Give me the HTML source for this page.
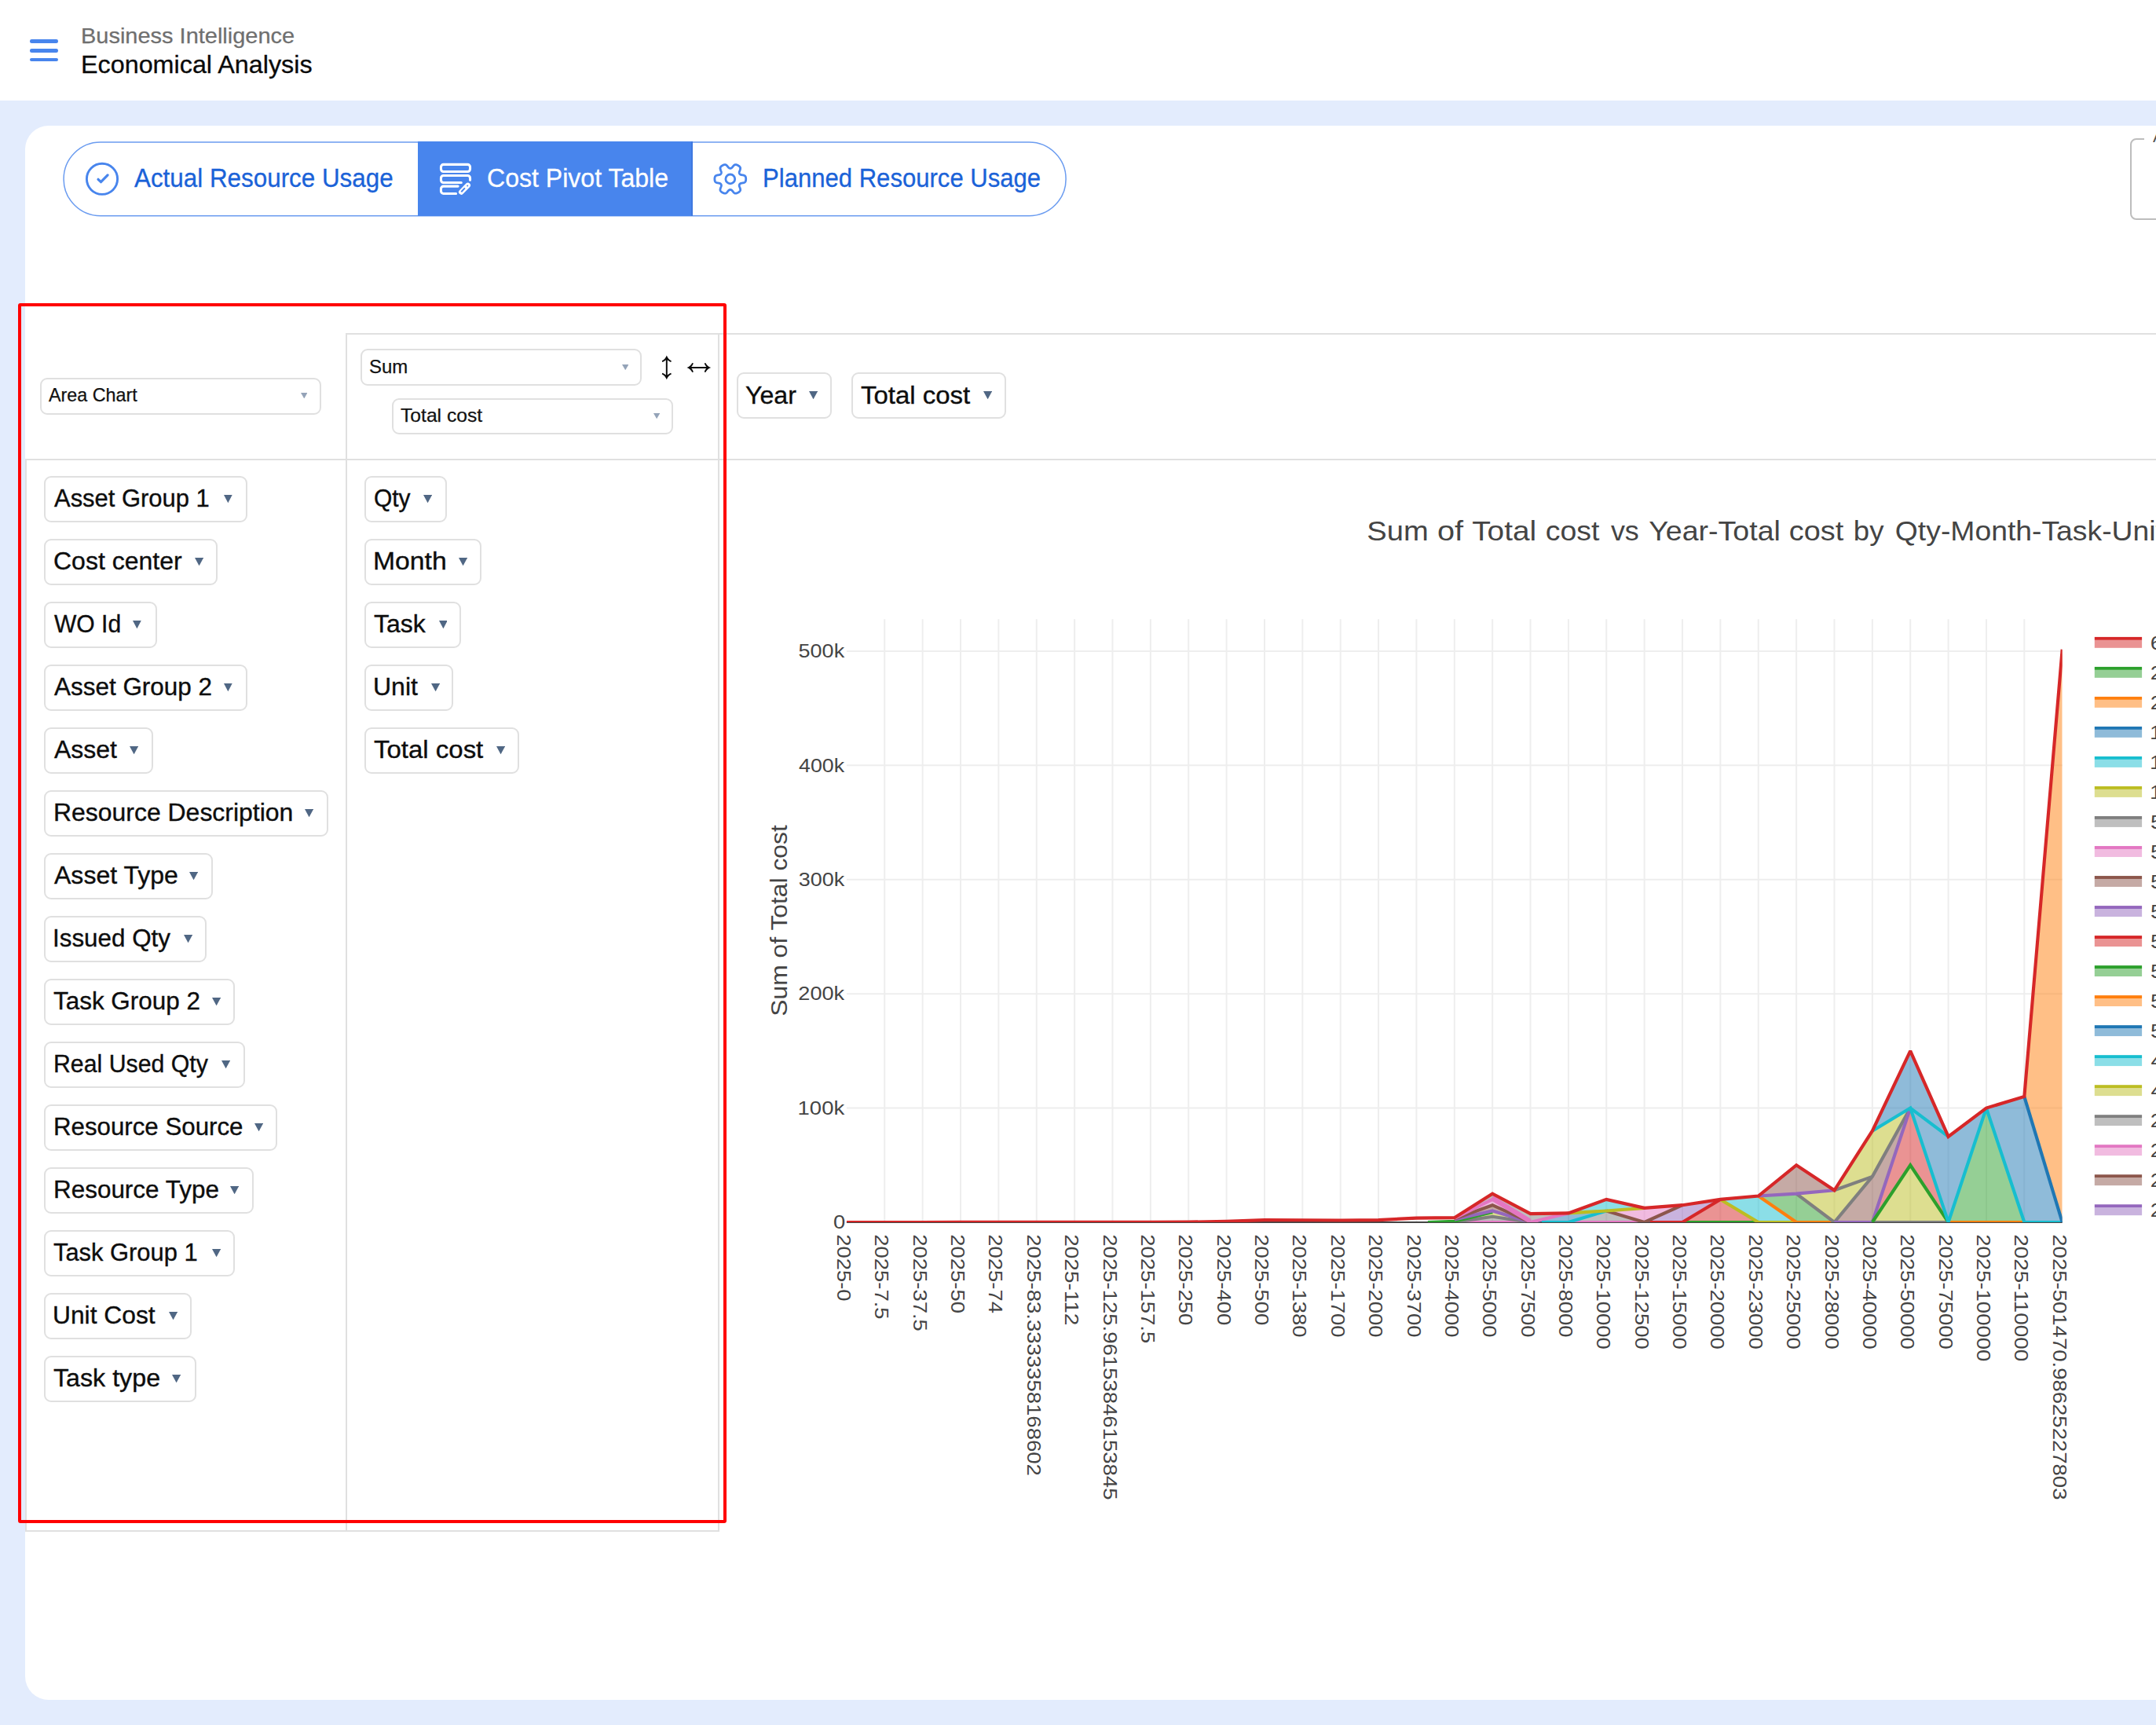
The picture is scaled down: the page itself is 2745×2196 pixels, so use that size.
<!DOCTYPE html>
<html lang="en"><head><meta charset="utf-8"><title>Economical Analysis</title>
<style>
html,body{margin:0;padding:0}
body{width:2745px;height:2196px;overflow:hidden;position:relative;background:#e3ecfd;font-family:"Liberation Sans", sans-serif;}
.abs{position:absolute}
.t{position:absolute;white-space:nowrap;line-height:1;transform-origin:0 50%;font-family:"Liberation Sans", sans-serif;}
.box{position:absolute;box-sizing:border-box;border:2px solid #e0e0e0;border-radius:9px;background:#fff}
.ln{position:absolute;background:#e0e0e0}
svg text{font-family:"Liberation Sans", sans-serif;}
</style></head><body>

<div class="abs" style="left:0;top:0;width:2745px;height:128px;background:#fff"></div>
<div class="abs" style="left:38px;top:50.1px;width:36.2px;height:4.6px;border-radius:2.3px;background:#4885ed"></div>
<div class="abs" style="left:38px;top:62.0px;width:36.2px;height:4.6px;border-radius:2.3px;background:#4885ed"></div>
<div class="abs" style="left:38px;top:73.9px;width:36.2px;height:4.6px;border-radius:2.3px;background:#4885ed"></div>
<span class="t" style="left:103.42px;top:32.23px;font-size:27.2px;color:#6f6f6f;transform:scaleX(1.0655);-webkit-text-stroke:0.25px #6f6f6f;">Business Intelligence</span>
<span class="t" style="left:103.15px;top:67.05px;font-size:31.6px;color:#0a0a0a;transform:scaleX(1.0228);-webkit-text-stroke:0.3px #0a0a0a;">Economical Analysis</span>
<div class="abs" style="left:32px;top:160px;width:2745px;height:2004px;border-radius:30px;background:#fff"></div>
<svg class="abs" style="left:0;top:170px" width="1400" height="120" viewBox="0 170 1400 120"><rect x="81.1" y="181.1" width="1276" height="93.6" rx="46.8" fill="#fff" stroke="#6b9cf0" stroke-width="1.5"/></svg>
<div class="abs" style="left:532px;top:180.4px;width:349.8px;height:94.9px;background:#4885ed"></div>
<div class="abs" style="left:880px;top:180.4px;width:2px;height:94.9px;background:#3f78e0"></div>
<span class="t" style="left:171.24px;top:210.47px;font-size:33px;color:#1a62d8;transform:scaleX(0.9509);-webkit-text-stroke:0.3px #1a62d8;">Actual Resource Usage</span>
<span class="t" style="left:619.67px;top:210.47px;font-size:33px;color:#ffffff;transform:scaleX(0.9714);-webkit-text-stroke:0.3px #fff;">Cost Pivot Table</span>
<span class="t" style="left:970.65px;top:210.47px;font-size:33px;color:#1a62d8;transform:scaleX(0.9417);-webkit-text-stroke:0.3px #1a62d8;">Planned Resource Usage</span>
<svg class="abs" style="left:0;top:0" width="2745" height="300" viewBox="0 0 2745 300" fill="none" stroke-linecap="round" stroke-linejoin="round">
<circle cx="130" cy="227.8" r="19.6" stroke="#4885ed" stroke-width="2.9"/>
<path d="M125 228.3 L128.5 231.7 L137.1 222.9" stroke="#4885ed" stroke-width="3.2"/>
<g stroke="#fff" stroke-width="3.05">
<rect x="561.45" y="209.35" width="37.1" height="9.15" rx="3.2"/>
<path d="M598.55 229.3 V226.7 a3.2 3.2 0 0 0 -3.2 -3.2 H564.65 a3.2 3.2 0 0 0 -3.2 3.2 v2.6 a3.2 3.2 0 0 0 3.2 3.2 H587.3"/>
<path d="M583.1 237.1 H564.65 a3.2 3.2 0 0 0 -3.2 3.2 v2.95 a3.2 3.2 0 0 0 3.2 3.2 H580.6"/>
<path d="M587.3 244.5 L595.7 235.9" stroke-width="6.6"/>
</g>
<path d="M587.3 244.2 L591.9 239.4" stroke="#4885ed" stroke-width="2.0" stroke-linecap="butt"/>
<circle cx="595.2" cy="236.6" r="1.0" fill="#4885ed"/>
<path d="M949.70 227.90 L949.70 228.25 L949.68 228.59 L949.65 228.94 L949.62 229.29 L949.57 229.63 L949.50 229.97 L949.42 230.31 L949.31 230.64 L949.18 230.97 L949.00 231.29 L948.78 231.59 L948.51 231.88 L948.16 232.14 L947.73 232.37 L947.23 232.57 L946.66 232.73 L946.04 232.87 L945.41 232.97 L944.80 233.06 L944.24 233.16 L943.74 233.25 L943.32 233.36 L942.96 233.49 L942.66 233.63 L942.41 233.78 L942.19 233.95 L942.01 234.12 L941.85 234.31 L941.70 234.50 L941.58 234.70 L941.47 234.91 L941.37 235.13 L941.29 235.36 L941.23 235.61 L941.20 235.88 L941.19 236.18 L941.22 236.51 L941.29 236.88 L941.41 237.30 L941.57 237.78 L941.77 238.31 L942.00 238.88 L942.22 239.48 L942.42 240.08 L942.56 240.66 L942.64 241.20 L942.65 241.68 L942.60 242.11 L942.49 242.50 L942.33 242.84 L942.15 243.15 L941.93 243.43 L941.70 243.69 L941.44 243.93 L941.18 244.15 L940.91 244.37 L940.63 244.57 L940.34 244.77 L940.05 244.96 L939.75 245.13 L939.45 245.30 L939.14 245.46 L938.83 245.61 L938.51 245.76 L938.19 245.88 L937.86 246.00 L937.52 246.09 L937.18 246.17 L936.83 246.21 L936.47 246.22 L936.10 246.19 L935.71 246.09 L935.31 245.92 L934.89 245.67 L934.47 245.33 L934.04 244.92 L933.62 244.45 L933.21 243.95 L932.83 243.47 L932.47 243.03 L932.14 242.65 L931.83 242.34 L931.54 242.09 L931.27 241.90 L931.01 241.76 L930.76 241.66 L930.52 241.58 L930.28 241.54 L930.04 241.51 L929.80 241.50 L929.56 241.51 L929.32 241.54 L929.08 241.58 L928.84 241.66 L928.59 241.76 L928.33 241.90 L928.06 242.09 L927.77 242.34 L927.46 242.65 L927.13 243.03 L926.77 243.47 L926.39 243.95 L925.98 244.45 L925.56 244.92 L925.13 245.33 L924.71 245.67 L924.29 245.92 L923.89 246.09 L923.50 246.19 L923.13 246.22 L922.77 246.21 L922.42 246.17 L922.08 246.09 L921.74 246.00 L921.41 245.88 L921.09 245.76 L920.77 245.61 L920.46 245.46 L920.15 245.30 L919.85 245.13 L919.55 244.96 L919.26 244.77 L918.97 244.57 L918.69 244.37 L918.42 244.15 L918.16 243.93 L917.90 243.69 L917.67 243.43 L917.45 243.15 L917.27 242.84 L917.11 242.50 L917.00 242.11 L916.95 241.68 L916.96 241.20 L917.04 240.66 L917.18 240.08 L917.38 239.48 L917.60 238.88 L917.83 238.31 L918.03 237.78 L918.19 237.30 L918.31 236.88 L918.38 236.51 L918.41 236.18 L918.40 235.88 L918.37 235.61 L918.31 235.36 L918.23 235.13 L918.13 234.91 L918.02 234.70 L917.90 234.50 L917.75 234.31 L917.59 234.12 L917.41 233.95 L917.19 233.78 L916.94 233.63 L916.64 233.49 L916.28 233.36 L915.86 233.25 L915.36 233.16 L914.80 233.06 L914.19 232.97 L913.56 232.87 L912.94 232.73 L912.37 232.57 L911.87 232.37 L911.44 232.14 L911.09 231.88 L910.82 231.59 L910.60 231.29 L910.42 230.97 L910.29 230.64 L910.18 230.31 L910.10 229.97 L910.03 229.63 L909.98 229.29 L909.95 228.94 L909.92 228.59 L909.90 228.25 L909.90 227.90 L909.90 227.55 L909.92 227.21 L909.95 226.86 L909.98 226.51 L910.03 226.17 L910.10 225.83 L910.18 225.49 L910.29 225.16 L910.42 224.83 L910.60 224.51 L910.82 224.21 L911.09 223.92 L911.44 223.66 L911.87 223.43 L912.37 223.23 L912.94 223.07 L913.56 222.93 L914.19 222.83 L914.80 222.74 L915.36 222.64 L915.86 222.55 L916.28 222.44 L916.64 222.31 L916.94 222.17 L917.19 222.02 L917.41 221.85 L917.59 221.68 L917.75 221.49 L917.90 221.30 L918.02 221.10 L918.13 220.89 L918.23 220.67 L918.31 220.44 L918.37 220.19 L918.40 219.92 L918.41 219.62 L918.38 219.29 L918.31 218.92 L918.19 218.50 L918.03 218.02 L917.83 217.49 L917.60 216.92 L917.38 216.32 L917.18 215.72 L917.04 215.14 L916.96 214.60 L916.95 214.12 L917.00 213.69 L917.11 213.30 L917.27 212.96 L917.45 212.65 L917.67 212.37 L917.90 212.11 L918.16 211.87 L918.42 211.65 L918.69 211.43 L918.97 211.23 L919.26 211.03 L919.55 210.84 L919.85 210.67 L920.15 210.50 L920.46 210.34 L920.77 210.19 L921.09 210.04 L921.41 209.92 L921.74 209.80 L922.08 209.71 L922.42 209.63 L922.77 209.59 L923.13 209.58 L923.50 209.61 L923.89 209.71 L924.29 209.88 L924.71 210.13 L925.13 210.47 L925.56 210.88 L925.98 211.35 L926.39 211.85 L926.77 212.33 L927.13 212.77 L927.46 213.15 L927.77 213.46 L928.06 213.71 L928.33 213.90 L928.59 214.04 L928.84 214.14 L929.08 214.22 L929.32 214.26 L929.56 214.29 L929.80 214.30 L930.04 214.29 L930.28 214.26 L930.52 214.22 L930.76 214.14 L931.01 214.04 L931.27 213.90 L931.54 213.71 L931.83 213.46 L932.14 213.15 L932.47 212.77 L932.83 212.33 L933.21 211.85 L933.62 211.35 L934.04 210.88 L934.47 210.47 L934.89 210.13 L935.31 209.88 L935.71 209.71 L936.10 209.61 L936.47 209.58 L936.83 209.59 L937.18 209.63 L937.52 209.71 L937.86 209.80 L938.19 209.92 L938.51 210.04 L938.83 210.19 L939.14 210.34 L939.45 210.50 L939.75 210.67 L940.05 210.84 L940.34 211.03 L940.63 211.23 L940.91 211.43 L941.18 211.65 L941.44 211.87 L941.70 212.11 L941.93 212.37 L942.15 212.65 L942.33 212.96 L942.49 213.30 L942.60 213.69 L942.65 214.12 L942.64 214.60 L942.56 215.14 L942.42 215.72 L942.22 216.32 L942.00 216.92 L941.77 217.49 L941.57 218.02 L941.41 218.50 L941.29 218.92 L941.22 219.29 L941.19 219.62 L941.20 219.92 L941.23 220.19 L941.29 220.44 L941.37 220.67 L941.47 220.89 L941.58 221.10 L941.70 221.30 L941.85 221.49 L942.01 221.68 L942.19 221.85 L942.41 222.02 L942.66 222.17 L942.96 222.31 L943.32 222.44 L943.74 222.55 L944.24 222.64 L944.80 222.74 L945.41 222.83 L946.04 222.93 L946.66 223.07 L947.23 223.23 L947.73 223.43 L948.16 223.66 L948.51 223.92 L948.78 224.21 L949.00 224.51 L949.18 224.83 L949.31 225.16 L949.42 225.49 L949.50 225.83 L949.57 226.17 L949.62 226.51 L949.65 226.86 L949.68 227.21 L949.70 227.55Z" stroke="#4885ed" stroke-width="2.8"/>
<circle cx="929.8" cy="227.9" r="5.9" stroke="#4885ed" stroke-width="2.8"/>
</svg>
<div class="abs" style="left:2712px;top:176.1px;width:60px;height:103.8px;box-sizing:border-box;border:2px solid #bdbdbd;border-radius:8px"></div>
<div class="abs" style="left:2730px;top:174px;width:20px;height:6px;background:#fff"></div>
<span class="t" style="left:2740.76px;top:163.15px;font-size:22.5px;color:#555;transform:scaleX(0.9920);">A</span>
<div class="ln" style="left:440px;top:424px;width:2305px;height:2px"></div>
<div class="ln" style="left:32px;top:584px;width:2713px;height:2px"></div>
<div class="ln" style="left:440px;top:424px;width:2px;height:1526px"></div>
<div class="ln" style="left:914px;top:424px;width:2px;height:1526px"></div>
<div class="ln" style="left:32px;top:584px;width:2px;height:1366px"></div>
<div class="ln" style="left:32px;top:1948px;width:884px;height:2px"></div>
<div class="box" style="left:50.6px;top:480.9px;width:358.7px;height:46.8px"></div>
<span class="t" style="left:61.85px;top:491.52px;font-size:23.6px;color:#111;transform:scaleX(0.9877);-webkit-text-stroke:0.25px #111;">Area Chart</span>
<svg class="abs" style="left:382.7px;top:499.9px" width="8.5" height="7.4" viewBox="0 0 10 10" preserveAspectRatio="none"><path d="M0 0H10L5 10z" fill="#94a3b8"/></svg>
<div class="box" style="left:458.6px;top:444.4px;width:358.7px;height:47.0px"></div>
<span class="t" style="left:469.51px;top:455.72px;font-size:23.6px;color:#111;transform:scaleX(1.0153);-webkit-text-stroke:0.25px #111;">Sum</span>
<svg class="abs" style="left:791.8px;top:464.1px" width="8.4" height="7.2" viewBox="0 0 10 10" preserveAspectRatio="none"><path d="M0 0H10L5 10z" fill="#94a3b8"/></svg>
<div class="box" style="left:498.7px;top:506.5px;width:358.7px;height:46.9px"></div>
<span class="t" style="left:509.95px;top:517.82px;font-size:23.6px;color:#111;transform:scaleX(1.0446);-webkit-text-stroke:0.25px #111;">Total cost</span>
<svg class="abs" style="left:831.5px;top:526.0px" width="8.3" height="7.2" viewBox="0 0 10 10" preserveAspectRatio="none"><path d="M0 0H10L5 10z" fill="#94a3b8"/></svg>
<svg class="abs" style="left:835px;top:445px" width="80" height="45" viewBox="835 445 80 45">
<path d="M848.8 455 V481 M878 467.9 H901.6" stroke="#0a0a0a" stroke-width="1.95" fill="none"/>
<path d="M848.80 452.50C847.60 455.70 845.40 458.20 842.80 459.30L843.30 460.90C845.00 460.20 846.70 459.30 847.85 458.20L849.75 458.20C850.90 459.30 852.60 460.20 854.30 460.90L854.80 459.30C852.20 458.20 850.00 455.70 848.80 452.50ZM848.80 483.20C850.00 480.00 852.20 477.50 854.80 476.40L854.30 474.80C852.60 475.50 850.90 476.40 849.75 477.50L847.85 477.50C846.70 476.40 845.00 475.50 843.30 474.80L842.80 476.40C845.40 477.50 847.60 480.00 848.80 483.20ZM874.50 467.90C877.70 469.10 880.20 471.30 881.30 473.90L882.90 473.40C882.20 471.70 881.30 470.00 880.20 468.85L880.20 466.95C881.30 465.80 882.20 464.10 882.90 462.40L881.30 461.90C880.20 464.50 877.70 466.70 874.50 467.90ZM905.10 467.90C901.90 466.70 899.40 464.50 898.30 461.90L896.70 462.40C897.40 464.10 898.30 465.80 899.40 466.95L899.40 468.85C898.30 470.00 897.40 471.70 896.70 473.40L898.30 473.90C899.40 471.30 901.90 469.10 905.10 467.90Z" fill="#0a0a0a"/>
</svg>
<div class="box" style="left:56.3px;top:606.3px;width:259.2px;height:58.8px"></div>
<span class="t" style="left:68.74px;top:619.46px;font-size:31px;color:#0d0d0d;transform:scaleX(0.9976);-webkit-text-stroke:0.35px #0d0d0d;">Asset Group 1</span>
<svg class="abs" style="left:285.3px;top:629.9px" width="10.7" height="10.3" viewBox="0 0 10 10" preserveAspectRatio="none"><path d="M0 0H10L5 10z" fill="#506784"/></svg>
<div class="box" style="left:56.3px;top:686.3px;width:221.2px;height:58.8px"></div>
<span class="t" style="left:67.97px;top:699.46px;font-size:31px;color:#0d0d0d;transform:scaleX(1.0325);-webkit-text-stroke:0.35px #0d0d0d;">Cost center</span>
<svg class="abs" style="left:247.8px;top:709.9px" width="11.1" height="10.3" viewBox="0 0 10 10" preserveAspectRatio="none"><path d="M0 0H10L5 10z" fill="#506784"/></svg>
<div class="box" style="left:56.3px;top:766.3px;width:143.3px;height:58.8px"></div>
<span class="t" style="left:68.67px;top:779.46px;font-size:31px;color:#0d0d0d;transform:scaleX(0.9696);-webkit-text-stroke:0.35px #0d0d0d;">WO Id</span>
<svg class="abs" style="left:169.3px;top:789.9px" width="10.8" height="10.3" viewBox="0 0 10 10" preserveAspectRatio="none"><path d="M0 0H10L5 10z" fill="#506784"/></svg>
<div class="box" style="left:56.3px;top:846.3px;width:259.2px;height:58.8px"></div>
<span class="t" style="left:68.74px;top:859.46px;font-size:31px;color:#0d0d0d;transform:scaleX(1.0146);-webkit-text-stroke:0.35px #0d0d0d;">Asset Group 2</span>
<svg class="abs" style="left:285.3px;top:869.9px" width="10.7" height="10.3" viewBox="0 0 10 10" preserveAspectRatio="none"><path d="M0 0H10L5 10z" fill="#506784"/></svg>
<div class="box" style="left:56.3px;top:926.3px;width:139.2px;height:58.8px"></div>
<span class="t" style="left:68.74px;top:939.46px;font-size:31px;color:#0d0d0d;transform:scaleX(1.0318);-webkit-text-stroke:0.35px #0d0d0d;">Asset</span>
<svg class="abs" style="left:165.2px;top:949.9px" width="11.2" height="10.3" viewBox="0 0 10 10" preserveAspectRatio="none"><path d="M0 0H10L5 10z" fill="#506784"/></svg>
<div class="box" style="left:56.3px;top:1006.3px;width:361.3px;height:58.8px"></div>
<span class="t" style="left:67.58px;top:1019.46px;font-size:31px;color:#0d0d0d;transform:scaleX(1.0302);-webkit-text-stroke:0.35px #0d0d0d;">Resource Description</span>
<svg class="abs" style="left:387.5px;top:1029.9px" width="11.1" height="10.3" viewBox="0 0 10 10" preserveAspectRatio="none"><path d="M0 0H10L5 10z" fill="#506784"/></svg>
<div class="box" style="left:56.3px;top:1086.3px;width:215.1px;height:58.8px"></div>
<span class="t" style="left:68.74px;top:1099.46px;font-size:31px;color:#0d0d0d;transform:scaleX(1.0333);-webkit-text-stroke:0.35px #0d0d0d;">Asset Type</span>
<svg class="abs" style="left:241.3px;top:1109.9px" width="11.1" height="10.3" viewBox="0 0 10 10" preserveAspectRatio="none"><path d="M0 0H10L5 10z" fill="#506784"/></svg>
<div class="box" style="left:56.3px;top:1166.3px;width:206.9px;height:58.8px"></div>
<span class="t" style="left:67.30px;top:1179.46px;font-size:31px;color:#0d0d0d;transform:scaleX(1.0120);-webkit-text-stroke:0.35px #0d0d0d;">Issued Qty</span>
<svg class="abs" style="left:233.9px;top:1189.9px" width="11.1" height="10.3" viewBox="0 0 10 10" preserveAspectRatio="none"><path d="M0 0H10L5 10z" fill="#506784"/></svg>
<div class="box" style="left:56.3px;top:1246.3px;width:243.1px;height:58.8px"></div>
<span class="t" style="left:68.09px;top:1259.46px;font-size:31px;color:#0d0d0d;transform:scaleX(1.0137);-webkit-text-stroke:0.35px #0d0d0d;">Task Group 2</span>
<svg class="abs" style="left:270.0px;top:1269.9px" width="11.2" height="10.3" viewBox="0 0 10 10" preserveAspectRatio="none"><path d="M0 0H10L5 10z" fill="#506784"/></svg>
<div class="box" style="left:56.3px;top:1326.3px;width:255.5px;height:58.8px"></div>
<span class="t" style="left:67.72px;top:1339.46px;font-size:31px;color:#0d0d0d;transform:scaleX(0.9765);-webkit-text-stroke:0.35px #0d0d0d;">Real Used Qty</span>
<svg class="abs" style="left:281.6px;top:1349.9px" width="11.1" height="10.3" viewBox="0 0 10 10" preserveAspectRatio="none"><path d="M0 0H10L5 10z" fill="#506784"/></svg>
<div class="box" style="left:56.3px;top:1406.3px;width:297.2px;height:58.8px"></div>
<span class="t" style="left:67.64px;top:1419.46px;font-size:31px;color:#0d0d0d;transform:scaleX(1.0081);-webkit-text-stroke:0.35px #0d0d0d;">Resource Source</span>
<svg class="abs" style="left:324.4px;top:1429.9px" width="11.1" height="10.3" viewBox="0 0 10 10" preserveAspectRatio="none"><path d="M0 0H10L5 10z" fill="#506784"/></svg>
<div class="box" style="left:56.3px;top:1486.3px;width:267.0px;height:58.8px"></div>
<span class="t" style="left:67.62px;top:1499.46px;font-size:31px;color:#0d0d0d;transform:scaleX(1.0141);-webkit-text-stroke:0.35px #0d0d0d;">Resource Type</span>
<svg class="abs" style="left:293.2px;top:1509.9px" width="11.2" height="10.3" viewBox="0 0 10 10" preserveAspectRatio="none"><path d="M0 0H10L5 10z" fill="#506784"/></svg>
<div class="box" style="left:56.3px;top:1566.3px;width:243.1px;height:58.8px"></div>
<span class="t" style="left:68.11px;top:1579.46px;font-size:31px;color:#0d0d0d;transform:scaleX(0.9959);-webkit-text-stroke:0.35px #0d0d0d;">Task Group 1</span>
<svg class="abs" style="left:270.0px;top:1589.9px" width="11.2" height="10.3" viewBox="0 0 10 10" preserveAspectRatio="none"><path d="M0 0H10L5 10z" fill="#506784"/></svg>
<div class="box" style="left:56.3px;top:1646.3px;width:187.4px;height:58.8px"></div>
<span class="t" style="left:67.35px;top:1659.46px;font-size:31px;color:#0d0d0d;transform:scaleX(1.0243);-webkit-text-stroke:0.35px #0d0d0d;">Unit Cost</span>
<svg class="abs" style="left:214.8px;top:1669.9px" width="11.1" height="10.3" viewBox="0 0 10 10" preserveAspectRatio="none"><path d="M0 0H10L5 10z" fill="#506784"/></svg>
<div class="box" style="left:56.3px;top:1726.3px;width:193.3px;height:58.8px"></div>
<span class="t" style="left:68.08px;top:1739.46px;font-size:31px;color:#0d0d0d;transform:scaleX(1.0390);-webkit-text-stroke:0.35px #0d0d0d;">Task type</span>
<svg class="abs" style="left:219.0px;top:1749.9px" width="11.2" height="10.3" viewBox="0 0 10 10" preserveAspectRatio="none"><path d="M0 0H10L5 10z" fill="#506784"/></svg>
<div class="box" style="left:464.1px;top:606.3px;width:105.2px;height:58.8px"></div>
<span class="t" style="left:475.68px;top:619.46px;font-size:31px;color:#0d0d0d;transform:scaleX(0.9658);-webkit-text-stroke:0.35px #0d0d0d;">Qty</span>
<svg class="abs" style="left:539.3px;top:629.9px" width="11.1" height="10.3" viewBox="0 0 10 10" preserveAspectRatio="none"><path d="M0 0H10L5 10z" fill="#506784"/></svg>
<div class="box" style="left:464.1px;top:686.3px;width:149.4px;height:58.8px"></div>
<span class="t" style="left:475.13px;top:699.46px;font-size:31px;color:#0d0d0d;transform:scaleX(1.0882);-webkit-text-stroke:0.35px #0d0d0d;">Month</span>
<svg class="abs" style="left:583.8px;top:709.9px" width="11.1" height="10.3" viewBox="0 0 10 10" preserveAspectRatio="none"><path d="M0 0H10L5 10z" fill="#506784"/></svg>
<div class="box" style="left:464.1px;top:766.3px;width:123.4px;height:58.8px"></div>
<span class="t" style="left:475.98px;top:779.46px;font-size:31px;color:#0d0d0d;transform:scaleX(1.0303);-webkit-text-stroke:0.35px #0d0d0d;">Task</span>
<svg class="abs" style="left:558.7px;top:789.9px" width="10.8" height="10.3" viewBox="0 0 10 10" preserveAspectRatio="none"><path d="M0 0H10L5 10z" fill="#506784"/></svg>
<div class="box" style="left:464.1px;top:846.3px;width:113.2px;height:58.8px"></div>
<span class="t" style="left:475.13px;top:859.46px;font-size:31px;color:#0d0d0d;transform:scaleX(1.0322);-webkit-text-stroke:0.35px #0d0d0d;">Unit</span>
<svg class="abs" style="left:548.5px;top:869.9px" width="11.2" height="10.3" viewBox="0 0 10 10" preserveAspectRatio="none"><path d="M0 0H10L5 10z" fill="#506784"/></svg>
<div class="box" style="left:464.1px;top:926.3px;width:197.2px;height:58.8px"></div>
<span class="t" style="left:475.96px;top:939.46px;font-size:31px;color:#0d0d0d;transform:scaleX(1.0636);-webkit-text-stroke:0.35px #0d0d0d;">Total cost</span>
<svg class="abs" style="left:631.7px;top:949.9px" width="11.1" height="10.3" viewBox="0 0 10 10" preserveAspectRatio="none"><path d="M0 0H10L5 10z" fill="#506784"/></svg>
<div class="box" style="left:938.4px;top:474.4px;width:120.8px;height:58.8px"></div>
<span class="t" style="left:949.39px;top:487.56px;font-size:31px;color:#0d0d0d;transform:scaleX(1.0351);-webkit-text-stroke:0.35px #0d0d0d;">Year</span>
<svg class="abs" style="left:1029.9px;top:498.0px" width="11.1" height="10.3" viewBox="0 0 10 10" preserveAspectRatio="none"><path d="M0 0H10L5 10z" fill="#506784"/></svg>
<div class="box" style="left:1084.2px;top:474.4px;width:197.1px;height:58.8px"></div>
<span class="t" style="left:1096.46px;top:487.56px;font-size:31px;color:#0d0d0d;transform:scaleX(1.0629);-webkit-text-stroke:0.35px #0d0d0d;">Total cost</span>
<svg class="abs" style="left:1251.9px;top:498.0px" width="11.2" height="10.3" viewBox="0 0 10 10" preserveAspectRatio="none"><path d="M0 0H10L5 10z" fill="#506784"/></svg>
<svg class="abs" style="left:0;top:0" width="2745" height="2196" viewBox="0 0 2745 2196">
<defs><clipPath id="pc"><rect x="1077.9" y="788.3" width="1547.8" height="767.7"/></clipPath></defs>
<path d="M1126.27 788.3V1556.00M1174.64 788.3V1556.00M1223.01 788.3V1556.00M1271.38 788.3V1556.00M1319.74 788.3V1556.00M1368.11 788.3V1556.00M1416.48 788.3V1556.00M1464.85 788.3V1556.00M1513.22 788.3V1556.00M1561.59 788.3V1556.00M1609.96 788.3V1556.00M1658.33 788.3V1556.00M1706.69 788.3V1556.00M1755.06 788.3V1556.00M1803.43 788.3V1556.00M1851.80 788.3V1556.00M1900.17 788.3V1556.00M1948.54 788.3V1556.00M1996.91 788.3V1556.00M2045.27 788.3V1556.00M2093.64 788.3V1556.00M2142.01 788.3V1556.00M2190.38 788.3V1556.00M2238.75 788.3V1556.00M2287.12 788.3V1556.00M2335.49 788.3V1556.00M2383.86 788.3V1556.00M2432.22 788.3V1556.00M2480.59 788.3V1556.00M2528.96 788.3V1556.00M2577.33 788.3V1556.00M1077.9 1410.58H2625.7M1077.9 1265.16H2625.7M1077.9 1119.74H2625.7M1077.9 974.32H2625.7M1077.9 828.90H2625.7" stroke="#eeeeee" stroke-width="2" fill="none"/>
<path d="M1077.9 1556.00H2625.7" stroke="#444" stroke-width="2"/>
<g clip-path="url(#pc)">
<g fill-opacity="0.5" stroke="none">
<polygon points="1851.80,1556.00 1900.17,1548.73 1948.54,1556.00" fill="#7f7f7f"/>
<polygon points="1851.80,1555.27 1900.17,1541.46 1948.54,1556.00 1900.17,1548.73" fill="#bcbd22"/>
<polygon points="1851.80,1554.55 1900.17,1534.19 1948.54,1556.00 1900.17,1541.46" fill="#8c564b"/>
<polygon points="1851.80,1553.09 1900.17,1526.92 1948.54,1556.00 1900.17,1534.19" fill="#e377c2"/>
<polygon points="1851.80,1550.91 1851.80,1550.18 1900.17,1519.64 1948.54,1545.09 1996.91,1544.37 1948.54,1556.00 1900.17,1526.92" fill="#7f7f7f"/>
<polygon points="1948.54,1556.00 1996.91,1544.37 2045.27,1541.46 1996.91,1556.00" fill="#1f77b4"/>
<polygon points="1996.91,1556.00 2045.27,1541.46 2093.64,1556.00" fill="#7f7f7f"/>
<polygon points="1996.91,1544.37 2045.27,1526.92 2093.64,1537.82 2045.27,1541.46" fill="#17becf"/>
<polygon points="2045.27,1541.46 2093.64,1537.82 2142.01,1534.19 2093.64,1556.00" fill="#e377c2"/>
<polygon points="2093.64,1556.00 2142.01,1534.19 2190.38,1526.92 2142.01,1556.00" fill="#9467bd"/>
<polygon points="2142.01,1556.00 2190.38,1526.92 2238.75,1556.00" fill="#d62728"/>
<polygon points="2190.38,1526.92 2238.75,1522.55 2287.12,1556.00 2238.75,1556.00" fill="#17becf"/>
<polygon points="2238.75,1522.55 2287.12,1519.64 2335.49,1556.00 2287.12,1556.00" fill="#2ca02c"/>
<polygon points="2238.75,1522.55 2287.12,1483.29 2335.49,1515.28 2287.12,1519.64" fill="#8c564b"/>
<polygon points="2287.12,1519.64 2335.49,1515.28 2383.86,1497.83 2335.49,1556.00" fill="#bcbd22"/>
<polygon points="2335.49,1515.28 2383.86,1439.66 2432.22,1410.58 2383.86,1497.83" fill="#bcbd22"/>
<polygon points="2335.49,1556.00 2383.86,1497.83 2432.22,1410.58 2383.86,1556.00" fill="#8c564b"/>
<polygon points="2383.86,1556.00 2432.22,1410.58 2480.59,1556.00 2432.22,1483.29" fill="#d62728"/>
<polygon points="2383.86,1556.00 2432.22,1483.29 2480.59,1556.00" fill="#bcbd22"/>
<polygon points="2383.86,1439.66 2432.22,1337.87 2480.59,1446.93 2432.22,1410.58" fill="#1f77b4"/>
<polygon points="2432.22,1410.58 2480.59,1446.93 2528.96,1410.58 2577.33,1396.04 2625.70,1556.00 2577.33,1556.00 2528.96,1410.58 2480.59,1556.00" fill="#1f77b4"/>
<polygon points="2480.59,1556.00 2528.96,1410.58 2577.33,1556.00" fill="#2ca02c"/>
<polygon points="2577.33,1396.04 2625.70,826.76 2625.70,1556.00" fill="#ff7f0e"/>
</g>
<g fill="none" stroke-width="4.15" stroke-linejoin="miter" stroke-miterlimit="2" stroke-linecap="butt">
<polyline points="1851.80,1556.00 1948.54,1556.00" stroke="#e377c2"/>
<polyline points="1996.91,1556.00 2093.64,1556.00" stroke="#e377c2"/>
<polyline points="2142.01,1556.00 2238.75,1556.00" stroke="#2ca02c"/>
<polyline points="2383.86,1556.00 2480.59,1556.00" stroke="#7f7f7f"/>
<polyline points="2480.59,1556.00 2577.33,1556.00" stroke="#ff7f0e"/>
<polyline points="1851.80,1556.00 1900.17,1548.73 1948.54,1556.00" stroke="#7f7f7f"/>
<polyline points="1817.94,1556.00 1851.80,1554.84 1900.17,1542.91" stroke="#2ca02c"/>
<polyline points="1851.80,1552.51 1900.17,1541.46 1948.54,1556.00" stroke="#9467bd"/>
<polyline points="1851.80,1551.64 1900.17,1534.19 1948.54,1556.00" stroke="#8c564b"/>
<polyline points="1851.80,1550.91 1900.17,1526.92 1948.54,1556.00 1996.91,1544.37" stroke="#e377c2"/>
<polyline points="1900.17,1524.01 1948.54,1553.82" stroke="#e377c2"/>
<polyline points="1963.05,1556.00 1996.91,1556.00 2045.27,1541.46" stroke="#17becf"/>
<polyline points="2045.27,1541.46 2093.64,1556.00 2142.01,1534.19" stroke="#8c564b"/>
<polyline points="1996.91,1544.37 2045.27,1541.46 2093.64,1537.82" stroke="#bcbd22"/>
<polyline points="2100.90,1556.00 2142.01,1556.00 2190.38,1526.92" stroke="#d62728"/>
<polyline points="2190.38,1526.92 2238.75,1556.00 2287.12,1556.00" stroke="#bcbd22"/>
<polyline points="2238.75,1522.55 2287.12,1556.00 2335.49,1556.00" stroke="#ff7f0e"/>
<polyline points="2287.12,1519.64 2335.49,1556.00 2383.86,1497.83 2432.22,1410.58" stroke="#7f7f7f"/>
<polyline points="2335.49,1515.28 2383.86,1497.83" stroke="#7f7f7f"/>
<polyline points="2238.75,1522.55 2287.12,1519.64 2335.49,1515.28" stroke="#9467bd"/>
<polyline points="2335.49,1556.00 2383.86,1556.00 2432.22,1410.58" stroke="#9467bd"/>
<polyline points="2383.86,1556.00 2432.22,1483.29 2480.59,1556.00" stroke="#2ca02c"/>
<polyline points="2432.22,1410.58 2480.59,1446.93" stroke="#17becf"/>
<polyline points="2383.86,1439.66 2432.22,1410.58 2480.59,1556.00 2528.96,1410.58 2577.33,1556.00 2625.70,1556.00" stroke="#17becf"/>
<polyline points="2577.33,1396.04 2625.70,1556.00" stroke="#1f77b4"/>
<polyline points="1077.90,1556.00 1126.27,1555.99 1174.64,1555.95 1223.01,1555.93 1271.38,1555.89 1319.74,1555.88 1368.11,1555.84 1416.48,1555.82 1464.85,1555.77 1513.22,1555.64 1561.59,1554.84 1609.96,1553.09 1658.33,1553.24 1706.69,1553.53 1755.06,1553.09 1803.43,1550.62 1851.80,1550.18 1900.17,1519.64 1948.54,1545.09 1996.91,1544.37 2045.27,1526.92 2093.64,1537.82 2142.01,1534.19 2190.38,1526.92 2238.75,1522.55 2287.12,1483.29 2335.49,1515.28 2383.86,1439.66 2432.22,1337.87 2480.59,1446.93 2528.96,1410.58 2577.33,1396.04 2625.70,826.76" stroke="#d62728"/>
</g></g>
<text transform="translate(1061.06,1564.20) scale(1.1114,1)" font-size="24.6" fill="#444444" >0</text>
<text transform="translate(1015.60,1418.78) scale(1.1165,1)" font-size="24.6" fill="#444444" >100k</text>
<text transform="translate(1016.33,1273.36) scale(1.1029,1)" font-size="24.6" fill="#444444" >200k</text>
<text transform="translate(1016.67,1127.94) scale(1.0966,1)" font-size="24.6" fill="#444444" >300k</text>
<text transform="translate(1017.08,982.52) scale(1.0888,1)" font-size="24.6" fill="#444444" >400k</text>
<text transform="translate(1016.61,837.10) scale(1.0976,1)" font-size="24.6" fill="#444444" >500k</text>
<text transform="translate(1066.00,1571.3) rotate(90) scale(1.1142,1)" font-size="24.6" fill="#444444">2025-0</text>
<text transform="translate(1114.37,1571.3) rotate(90) scale(1.1156,1)" font-size="24.6" fill="#444444">2025-7.5</text>
<text transform="translate(1162.74,1571.3) rotate(90) scale(1.1162,1)" font-size="24.6" fill="#444444">2025-37.5</text>
<text transform="translate(1211.11,1571.3) rotate(90) scale(1.1152,1)" font-size="24.6" fill="#444444">2025-50</text>
<text transform="translate(1259.47,1571.3) rotate(90) scale(1.1152,1)" font-size="24.6" fill="#444444">2025-74</text>
<text transform="translate(1307.84,1571.3) rotate(90) scale(1.1188,1)" font-size="24.6" fill="#444444">2025-83.3333358168602</text>
<text transform="translate(1356.21,1571.3) rotate(90) scale(1.1358,1)" font-size="24.6" fill="#444444">2025-112</text>
<text transform="translate(1404.58,1571.3) rotate(90) scale(1.1189,1)" font-size="24.6" fill="#444444">2025-125.96153846153845</text>
<text transform="translate(1452.95,1571.3) rotate(90) scale(1.1167,1)" font-size="24.6" fill="#444444">2025-157.5</text>
<text transform="translate(1501.32,1571.3) rotate(90) scale(1.1159,1)" font-size="24.6" fill="#444444">2025-250</text>
<text transform="translate(1549.69,1571.3) rotate(90) scale(1.1159,1)" font-size="24.6" fill="#444444">2025-400</text>
<text transform="translate(1598.06,1571.3) rotate(90) scale(1.1159,1)" font-size="24.6" fill="#444444">2025-500</text>
<text transform="translate(1646.42,1571.3) rotate(90) scale(1.1164,1)" font-size="24.6" fill="#444444">2025-1380</text>
<text transform="translate(1694.79,1571.3) rotate(90) scale(1.1164,1)" font-size="24.6" fill="#444444">2025-1700</text>
<text transform="translate(1743.16,1571.3) rotate(90) scale(1.1164,1)" font-size="24.6" fill="#444444">2025-2000</text>
<text transform="translate(1791.53,1571.3) rotate(90) scale(1.1164,1)" font-size="24.6" fill="#444444">2025-3700</text>
<text transform="translate(1839.90,1571.3) rotate(90) scale(1.1164,1)" font-size="24.6" fill="#444444">2025-4000</text>
<text transform="translate(1888.27,1571.3) rotate(90) scale(1.1164,1)" font-size="24.6" fill="#444444">2025-5000</text>
<text transform="translate(1936.64,1571.3) rotate(90) scale(1.1164,1)" font-size="24.6" fill="#444444">2025-7500</text>
<text transform="translate(1985.01,1571.3) rotate(90) scale(1.1164,1)" font-size="24.6" fill="#444444">2025-8000</text>
<text transform="translate(2033.37,1571.3) rotate(90) scale(1.1169,1)" font-size="24.6" fill="#444444">2025-10000</text>
<text transform="translate(2081.74,1571.3) rotate(90) scale(1.1169,1)" font-size="24.6" fill="#444444">2025-12500</text>
<text transform="translate(2130.11,1571.3) rotate(90) scale(1.1169,1)" font-size="24.6" fill="#444444">2025-15000</text>
<text transform="translate(2178.48,1571.3) rotate(90) scale(1.1169,1)" font-size="24.6" fill="#444444">2025-20000</text>
<text transform="translate(2226.85,1571.3) rotate(90) scale(1.1169,1)" font-size="24.6" fill="#444444">2025-23000</text>
<text transform="translate(2275.22,1571.3) rotate(90) scale(1.1169,1)" font-size="24.6" fill="#444444">2025-25000</text>
<text transform="translate(2323.59,1571.3) rotate(90) scale(1.1169,1)" font-size="24.6" fill="#444444">2025-28000</text>
<text transform="translate(2371.96,1571.3) rotate(90) scale(1.1169,1)" font-size="24.6" fill="#444444">2025-40000</text>
<text transform="translate(2420.32,1571.3) rotate(90) scale(1.1169,1)" font-size="24.6" fill="#444444">2025-50000</text>
<text transform="translate(2468.69,1571.3) rotate(90) scale(1.1169,1)" font-size="24.6" fill="#444444">2025-75000</text>
<text transform="translate(2517.06,1571.3) rotate(90) scale(1.1172,1)" font-size="24.6" fill="#444444">2025-100000</text>
<text transform="translate(2565.43,1571.3) rotate(90) scale(1.1314,1)" font-size="24.6" fill="#444444">2025-110000</text>
<text transform="translate(2613.80,1571.3) rotate(90) scale(1.1189,1)" font-size="24.6" fill="#444444">2025-501470.98625227803</text>
<text transform="translate(1002.3,1293.64) rotate(-90) scale(1.0972,1)" font-size="29" fill="#444444">Sum of Total cost</text>
<text transform="translate(1740.37,687.90) scale(1.0901,1)" font-size="35" fill="#444444" >Sum</text>
<text transform="translate(1830.03,687.90) scale(1.1343,1)" font-size="35" fill="#444444" >of</text>
<text transform="translate(1874.23,687.90) scale(1.1087,1)" font-size="35" fill="#444444" >Total</text>
<text transform="translate(1967.71,687.90) scale(1.0697,1)" font-size="35" fill="#444444" >cost</text>
<text transform="translate(2050.88,687.90) scale(1.0263,1)" font-size="35" fill="#444444" >vs</text>
<text transform="translate(2099.17,687.90) scale(1.0731,1)" font-size="35" fill="#444444" >Year-Total</text>
<text transform="translate(2277.79,687.90) scale(1.0825,1)" font-size="35" fill="#444444" >cost</text>
<text transform="translate(2359.84,687.90) scale(1.0450,1)" font-size="35" fill="#444444" >by</text>
<text transform="translate(2412.83,687.9) scale(1.0665,1)" font-size="35" fill="#444444">Qty-Month-Task-Unit-Total cost</text>
<rect x="2666.8" y="814.80" width="60.3" height="10" fill="#d62728" fill-opacity="0.5"/>
<rect x="2666.8" y="810.90" width="60.3" height="3.9" fill="#d62728"/>
<text transform="translate(2737.79,826.60) scale(1.13,1)" font-size="24.6" fill="#444444">6</text>
<rect x="2666.8" y="852.82" width="60.3" height="10" fill="#2ca02c" fill-opacity="0.5"/>
<rect x="2666.8" y="848.92" width="60.3" height="3.9" fill="#2ca02c"/>
<text transform="translate(2737.80,864.62) scale(1.13,1)" font-size="24.6" fill="#444444">2</text>
<rect x="2666.8" y="890.84" width="60.3" height="10" fill="#ff7f0e" fill-opacity="0.5"/>
<rect x="2666.8" y="886.94" width="60.3" height="3.9" fill="#ff7f0e"/>
<text transform="translate(2737.80,902.64) scale(1.13,1)" font-size="24.6" fill="#444444">2</text>
<rect x="2666.8" y="928.86" width="60.3" height="10" fill="#1f77b4" fill-opacity="0.5"/>
<rect x="2666.8" y="924.96" width="60.3" height="3.9" fill="#1f77b4"/>
<text transform="translate(2737.08,940.66) scale(1.13,1)" font-size="24.6" fill="#444444">1</text>
<rect x="2666.8" y="966.88" width="60.3" height="10" fill="#17becf" fill-opacity="0.5"/>
<rect x="2666.8" y="962.98" width="60.3" height="3.9" fill="#17becf"/>
<text transform="translate(2737.08,978.68) scale(1.13,1)" font-size="24.6" fill="#444444">1</text>
<rect x="2666.8" y="1004.90" width="60.3" height="10" fill="#bcbd22" fill-opacity="0.5"/>
<rect x="2666.8" y="1001.00" width="60.3" height="3.9" fill="#bcbd22"/>
<text transform="translate(2737.08,1016.70) scale(1.13,1)" font-size="24.6" fill="#444444">1</text>
<rect x="2666.8" y="1042.92" width="60.3" height="10" fill="#7f7f7f" fill-opacity="0.5"/>
<rect x="2666.8" y="1039.02" width="60.3" height="3.9" fill="#7f7f7f"/>
<text transform="translate(2738.09,1054.72) scale(1.13,1)" font-size="24.6" fill="#444444">5</text>
<rect x="2666.8" y="1080.94" width="60.3" height="10" fill="#e377c2" fill-opacity="0.5"/>
<rect x="2666.8" y="1077.04" width="60.3" height="3.9" fill="#e377c2"/>
<text transform="translate(2738.09,1092.74) scale(1.13,1)" font-size="24.6" fill="#444444">5</text>
<rect x="2666.8" y="1118.96" width="60.3" height="10" fill="#8c564b" fill-opacity="0.5"/>
<rect x="2666.8" y="1115.06" width="60.3" height="3.9" fill="#8c564b"/>
<text transform="translate(2738.09,1130.76) scale(1.13,1)" font-size="24.6" fill="#444444">5</text>
<rect x="2666.8" y="1156.98" width="60.3" height="10" fill="#9467bd" fill-opacity="0.5"/>
<rect x="2666.8" y="1153.08" width="60.3" height="3.9" fill="#9467bd"/>
<text transform="translate(2738.09,1168.78) scale(1.13,1)" font-size="24.6" fill="#444444">5</text>
<rect x="2666.8" y="1195.00" width="60.3" height="10" fill="#d62728" fill-opacity="0.5"/>
<rect x="2666.8" y="1191.10" width="60.3" height="3.9" fill="#d62728"/>
<text transform="translate(2738.09,1206.80) scale(1.13,1)" font-size="24.6" fill="#444444">5</text>
<rect x="2666.8" y="1233.02" width="60.3" height="10" fill="#2ca02c" fill-opacity="0.5"/>
<rect x="2666.8" y="1229.12" width="60.3" height="3.9" fill="#2ca02c"/>
<text transform="translate(2738.09,1244.82) scale(1.13,1)" font-size="24.6" fill="#444444">5</text>
<rect x="2666.8" y="1271.04" width="60.3" height="10" fill="#ff7f0e" fill-opacity="0.5"/>
<rect x="2666.8" y="1267.14" width="60.3" height="3.9" fill="#ff7f0e"/>
<text transform="translate(2738.09,1282.84) scale(1.13,1)" font-size="24.6" fill="#444444">5</text>
<rect x="2666.8" y="1309.06" width="60.3" height="10" fill="#1f77b4" fill-opacity="0.5"/>
<rect x="2666.8" y="1305.16" width="60.3" height="3.9" fill="#1f77b4"/>
<text transform="translate(2738.09,1320.86) scale(1.13,1)" font-size="24.6" fill="#444444">5</text>
<rect x="2666.8" y="1347.08" width="60.3" height="10" fill="#17becf" fill-opacity="0.5"/>
<rect x="2666.8" y="1343.18" width="60.3" height="3.9" fill="#17becf"/>
<text transform="translate(2738.56,1358.88) scale(1.13,1)" font-size="24.6" fill="#444444">4</text>
<rect x="2666.8" y="1385.10" width="60.3" height="10" fill="#bcbd22" fill-opacity="0.5"/>
<rect x="2666.8" y="1381.20" width="60.3" height="3.9" fill="#bcbd22"/>
<text transform="translate(2738.56,1396.90) scale(1.13,1)" font-size="24.6" fill="#444444">4</text>
<rect x="2666.8" y="1423.12" width="60.3" height="10" fill="#7f7f7f" fill-opacity="0.5"/>
<rect x="2666.8" y="1419.22" width="60.3" height="3.9" fill="#7f7f7f"/>
<text transform="translate(2737.80,1434.92) scale(1.13,1)" font-size="24.6" fill="#444444">2</text>
<rect x="2666.8" y="1461.14" width="60.3" height="10" fill="#e377c2" fill-opacity="0.5"/>
<rect x="2666.8" y="1457.24" width="60.3" height="3.9" fill="#e377c2"/>
<text transform="translate(2737.80,1472.94) scale(1.13,1)" font-size="24.6" fill="#444444">2</text>
<rect x="2666.8" y="1499.16" width="60.3" height="10" fill="#8c564b" fill-opacity="0.5"/>
<rect x="2666.8" y="1495.26" width="60.3" height="3.9" fill="#8c564b"/>
<text transform="translate(2737.80,1510.96) scale(1.13,1)" font-size="24.6" fill="#444444">2</text>
<rect x="2666.8" y="1537.18" width="60.3" height="10" fill="#9467bd" fill-opacity="0.5"/>
<rect x="2666.8" y="1533.28" width="60.3" height="3.9" fill="#9467bd"/>
<text transform="translate(2737.80,1548.98) scale(1.13,1)" font-size="24.6" fill="#444444">2</text>
</svg>
<div class="abs" style="left:23.2px;top:386.3px;width:902px;height:1552.8px;box-sizing:border-box;border:4px solid #ff0000;border-radius:3px"></div>
</body></html>
